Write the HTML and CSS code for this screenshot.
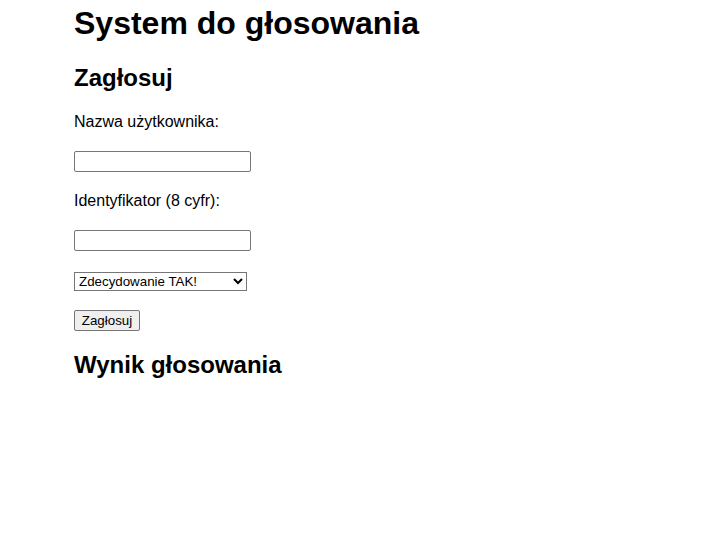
FILE: index.html
```html
<!DOCTYPE html>
<html lang="pl">
<head>
<meta charset="utf-8">
<title>System do głosowania</title>
<link rel="stylesheet" href="styles.css">
</head>
<body>
<main class="page">
  <h1 class="title">System do głosowania</h1>
  <h2 class="section-title first">Zagłosuj</h2>
  <form class="vote-form">
    <label class="field-label" for="username">Nazwa użytkownika:</label>
    <input class="text-input" type="text" id="username">
    <label class="field-label" for="ident">Identyfikator (8 cyfr):</label>
    <input class="text-input" type="text" id="ident">
    <select class="choice">
      <option>Zdecydowanie TAK!</option>
      <option>Raczej tak</option>
      <option>Raczej nie</option>
      <option>Zdecydowanie NIE!</option>
    </select>
    <button class="submit" type="button">Zagłosuj</button>
  </form>
  <h2 class="section-title results">Wynik głosowania</h2>
</main>
</body>
</html>
```

FILE: styles.css
```css
html, body {
  margin: 0;
  padding: 0;
  background: #ffffff;
}

body {
  font-family: "Liberation Sans", Arial, sans-serif;
  color: #000000;
  font-size: 16px;
}

.page {
  width: 565px;
  margin: 0 auto;
  display: flex;
  flex-direction: column;
  align-items: flex-start;
}

.title {
  font-size: 32px;
  font-weight: bold;
  line-height: normal;
  margin: 5px 0 0;
}

.section-title {
  font-size: 24px;
  font-weight: bold;
  line-height: normal;
  margin: 0;
}

.section-title.first {
  margin-top: 22px;
}

.section-title.results {
  margin-top: 20px;
}

.vote-form {
  display: flex;
  flex-direction: column;
  align-items: flex-start;
  margin-top: 21px;
}

.field-label {
  font-size: 16px;
  line-height: normal;
  color: #000000;
}

.text-input {
  box-sizing: border-box;
  width: 177px;
  height: 21px;
  margin: 20px 0 20px;
  padding: 1px 2px;
  border: 1px solid #767676;
  border-radius: 2px;
  background: #ffffff;
  font-family: "Liberation Sans", Arial, sans-serif;
  font-size: 13.33px;
}

.vote-form .text-input:last-of-type {
  margin-bottom: 21px;
}

.choice {
  box-sizing: border-box;
  width: 173px;
  height: 19px;
  margin: 0;
  font-family: "Liberation Sans", Arial, sans-serif;
  font-size: 13.33px;
  color: #000000;
  border: 1px solid #767676;
  border-radius: 0;
  background: #ffffff;
}

.submit {
  box-sizing: border-box;
  width: 66px;
  height: 21px;
  margin-top: 19px;
  padding: 1px 6px;
  font-family: "Liberation Sans", Arial, sans-serif;
  font-size: 13.33px;
  color: #000000;
  background: #efefef;
  border: 1px solid #767676;
  border-radius: 2px;
}
```
